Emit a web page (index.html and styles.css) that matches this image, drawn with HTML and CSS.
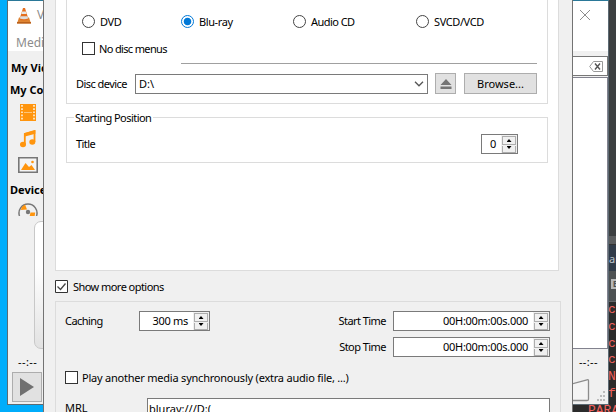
FILE: index.html
```html
<!DOCTYPE html>
<html lang="en">
<head>
<meta charset="utf-8">
<title>Open Media</title>
<link rel="stylesheet" href="styles.css">
</head>
<body>
<div class="desktop">
  <aside class="editor">
    <div class="ed-top"></div>
    <div class="ed-split"></div>
    <div class="ed-tab">ar</div>
    <div class="ed-tools"><span class="ed-icon">E</span></div>
    <div class="ed-log"><p>co</p><p>co</p><p>co</p><p>co</p><p>No</p><p>fr</p><p class="wide">PARAM</p></div>
  </aside>

  <section class="player">
    <header class="titlebar">
      <svg class="cone" width="14" height="18" viewBox="0 0 14 18"><path d="M2 11.5h10l2 6H0z" fill="#dd8432"/><path d="M0 16h14v1.5H0z" fill="#b9601c"/><path d="M6 2h2l3.6 11.4q-4.6 2-9.2 0z" fill="#e56f1f"/><path d="M5.1 5.5h3.8l.8 2.6H4.3z" fill="#e8e8e8"/><path d="M3.5 10.2h7l.7 2.3q-4.2 1.4-8.4 0z" fill="#ddd"/></svg>
      <span class="title">VLC</span>
      <svg class="close" width="12" height="12" viewBox="0 0 12 12"><path d="M1 1l10 10M11 1L1 11" stroke="#8d8d8d" fill="none"/></svg>
    </header>
    <nav class="menubar">Media</nav>
    <div class="workspace">
      <div class="sidebar">
        <b class="h1">My Videos</b>
        <b class="h2">My Computer</b>
        <svg class="film" width="16" height="17" viewBox="0 0 16 17"><path d="M0 0h16v17H0z" fill="#ff950e"/><path d="M2 1v16M14 1v16" stroke="#fff3df" stroke-width="1.6" stroke-dasharray="1.7 1.5"/><path d="M4 8.5h8" stroke="#fcc67c"/></svg>
        <svg class="note" width="16" height="18" viewBox="0 0 16 18"><path d="M4.8 14V4L14.5 1v11" stroke="#ff950e" stroke-width="1.8" fill="none"/><path d="M4 3.2L15.4.2v3.6L4 6.8z" fill="#ff950e"/><ellipse cx="3" cy="14.5" rx="3" ry="2.7" fill="#ff950e"/><ellipse cx="12.3" cy="12" rx="3" ry="2.7" fill="#ff950e"/></svg>
        <svg class="pic" width="20" height="16" viewBox="0 0 20 16"><path d="M.8.8h18.4v14.4H.8z" fill="#f4f4f4" stroke="#777" stroke-width="1.6"/><path d="M3 13l4.5-7 3.5 4 2.5-2 3.5 5z" fill="#ff950e"/><circle cx="14.5" cy="5" r="1.3" fill="#ff950e"/></svg>
        <b class="h3">Devices</b>
        <svg class="disc" width="20" height="14" viewBox="0 0 20 14"><path d="M1.5 14A9 9 0 1 1 18.5 14" stroke="#777" stroke-width="1.5" fill="none"/><path d="M9 7.5L7 2.6A8 8 0 0 0 2.8 8z" fill="#ff950e"/><path d="M12.5 10.5h4.7l-.5 3.5h-5z" fill="#ff950e"/><circle cx="10" cy="10" r="2.2" fill="#777"/></svg>
        <div class="cover"></div>
      </div>
      <div class="playlist">
        <div class="search"><svg width="14" height="11" viewBox="0 0 14 11"><path d="M4.5.5h9v10h-9L.7 5.5z" fill="#fff" stroke="#999"/><path d="M6 2.5l5 6M11 2.5l-5 6" stroke="#555" stroke-width="1.4"/></svg></div>
        <div class="list"></div>
      </div>
    </div>
    <footer class="status">
      <div class="times"><span>--:--</span><span>--:--</span></div>
      <div class="controls">
        <div class="play"><svg width="14" height="18" viewBox="0 0 14 18"><path d="M0 0l14 9-14 9z" fill="#707070"/></svg></div>
        <svg class="volume" width="35" height="24" viewBox="0 0 35 24"><path d="M-6 6.3L14 .8q1.5-.4 1.5 1v18.5q0 1.2-1.5 1.2H-6z" fill="#f4f4f4" stroke="#8c8c8c" stroke-width="1.3"/><path d="M30 15h2M30 19h2M30 23h2M27 19h2M27 23h2M24 23h2" transform="translate(0,-2)" stroke="#bbb" stroke-width="2"/></svg>
      </div>
    </footer>
  </section>

  <main class="dialog">
    <div class="page">
      <section class="group disc-group">
        <div class="radios">
          <label class="opt snug"><i class="radio"></i>DVD</label>
          <label class="opt snug"><i class="radio on"></i>Blu-ray</label>
          <label class="opt tight"><i class="radio"></i>Audio CD</label>
          <label class="opt snug"><i class="radio"></i>SVCD/VCD</label>
        </div>
        <label class="opt menus"><i class="check"></i>No disc menus</label>
        <div class="rule"></div>
        <div class="device">
          <span class="device-label tight">Disc device</span>
          <div class="combo"><span>D:\</span><svg width="10" height="6" viewBox="0 0 10 6"><path d="M1 .8l4 4 4-4" fill="none" stroke="#555" stroke-width="1.3"/></svg></div>
          <div class="btn eject"><svg width="12" height="10" viewBox="0 0 12 10"><path d="M6 0l5.5 6H.5zM.5 7.5h11V10H.5z" fill="#757575"/></svg></div>
          <div class="btn browse">Browse...</div>
        </div>
      </section>
      <section class="group start-group">
        <h2 class="legend tight">Starting Position</h2>
        <span class="title-label tight">Title</span>
        <div class="spin small"><span>0</span><div class="steps"><i></i><i class="dn"></i></div></div>
      </section>
    </div>
    <label class="opt more tight"><svg class="tick" width="13" height="13" viewBox="0 0 13 13"><path d="M.5.5h12v12H.5z" fill="#fff" stroke="#333"/><path d="M2.5 6.5l3 3 5-6" fill="none" stroke="#444" stroke-width="1.3"/></svg>Show more options</label>
    <section class="options">
      <div class="settings">
        <span class="caching tight">Caching</span>
        <div class="spin cache"><span>300 ms</span><div class="steps"><i></i><i class="dn"></i></div></div>
        <span class="time-label start tight">Start Time</span>
        <div class="spin time"><span>00H:00m:00s.000</span><div class="steps"><i></i><i class="dn"></i></div></div>
        <span class="time-label stop tight">Stop Time</span>
        <div class="spin time"><span>00H:00m:00s.000</span><div class="steps"><i></i><i class="dn"></i></div></div>
      </div>
      <label class="opt sync"><i class="check"></i><span class="sync-text">Play another media synchronously (extra audio file, ...)</span></label>
      <div class="mrl"><span>MRL</span><div class="mrl-input">bluray:///D:(</div></div>
    </section>
  </main>
</div>
</body>
</html>
```
FILE: styles.css
```css
* { box-sizing: border-box; }
body { margin: 0; font: 11px/14px "Noto Sans", sans-serif; color: #000; }
svg { display: block; flex: none; }
i { display: block; flex: none; }
.desktop { position: relative; width: 616px; height: 412px; overflow: hidden; background: #00adfb; }
.tight { letter-spacing: -.55px; }
.snug { letter-spacing: -.4px; }

.editor { position: absolute; left: 573px; top: 0; width: 43px; height: 412px; background: #2b2b2b; }
.ed-top { height: 236px; background: #3c3f41; }
.ed-split { height: 9px; background: #5b5d5f; border-bottom: 1px solid #333; }
.ed-tab { height: 26px; padding: 6px 0 0 36px; background: #303b49; color: #bbc4cc; font: 11px/16px "Noto Sans", sans-serif; overflow: hidden; }
.ed-tools { height: 31px; padding: 8px 0 0 38px; background: #4d5153; border-bottom: 1px solid #656769; }
.ed-icon { display: block; width: 10px; height: 10px; background: #b5b7b8; color: #4d5153; font: bold 9px/10px "Liberation Sans", sans-serif; padding-left: 2px; overflow: hidden; }
.ed-log { overflow: hidden; height: 110px; color: #f0605c; font: 13px/16.8px "Liberation Mono", monospace; }
.ed-log p { margin: 0 0 0 35px; white-space: nowrap; }
.ed-log .wide { margin: 0 0 0 15px; }

.player { position: absolute; left: 7px; top: 0; width: 602px; height: 405px; background: #f0f0f0; border: 1px solid #5c6a73; border-top-color: #2a7898; }
.titlebar { display: flex; height: 33px; background: #fff; color: #8c8c8c; }
.cone { margin: 5px 0 0 9px; }
.title { margin: 7px 0 0 6px; font-size: 12px; }
.close { margin: 8px 17px 0 auto; }
.menubar { height: 17px; padding: 2px 0 0 8px; background: #fff; color: #8c8c8c; font-size: 12px; line-height: 14px; }
.workspace { display: flex; justify-content: space-between; height: 298px; }
.sidebar { width: 35px; overflow: hidden; white-space: nowrap; }
.sidebar b { display: block; margin-left: 3px; height: 14px; line-height: 13px; font-weight: 700; }
.sidebar .h1 { margin-top: 10px; }
.sidebar .h2 { margin-top: 8px; margin-left: 2px; }
.sidebar .h3 { margin-top: 10px; margin-left: 2px; }
.film { margin: 7px 0 0 12px; }
.note { margin: 9px 0 0 12px; }
.pic { margin: 9px 0 0 10px; }
.disc { margin: 5px 0 0 10px; }
.cover { margin: 5px 0 0 26px; width: 60px; height: 128px; border: 1px solid #c8c8c8; border-radius: 7px; background: linear-gradient(#fff 35%, #e2e2e2); }
.playlist { width: 36px; padding-top: 5px; }
.search { display: flex; align-items: center; justify-content: flex-end; height: 20px; padding-right: 4px; border: 1px solid #777; background: #fff; }
.list { height: 272px; margin-top: 1px; background: #fff; border: 1px solid #82828e; }
.status { height: 53px; }
.times { display: flex; justify-content: space-between; padding: 6px 10px 0; height: 23px; letter-spacing: .4px; }
.controls { display: flex; justify-content: space-between; }
.play { display: flex; align-items: center; justify-content: center; width: 30px; height: 30px; margin-left: 4px; border: 1px solid #adadad; background: #e1e1e1; }
.volume { margin: 7px 0 0; }

.dialog { position: absolute; left: 43px; top: 0; width: 530px; height: 412px; padding: 0 11px; background: #f0f0f0; border: solid #737373; border-width: 0 1px; overflow: hidden; }
.page { width: 504px; height: 271px; padding: 0 10px; background: #fff; border: 1px solid #dcdcdc; border-top: 0; }
.group { width: 482px; border: 1px solid #dcdcdc; }
.disc-group { height: 104px; border-top: 0; padding: 15px 10px 0 9px; }
.opt { display: flex; align-items: center; height: 13px; white-space: nowrap; }
.radios { display: grid; grid-template-columns: 99px 112px 123px 1fr; padding-left: 6px; }
.radios .opt { gap: 5px; }
.radio { width: 13px; height: 13px; border: 1px solid #444; border-radius: 50%; background: #fff; }
.radio.on { border-color: #0078d7; background: radial-gradient(circle, #0078d7 3.4px, #fff 4.2px); }
.check { width: 13px; height: 13px; border: 1px solid #333; background: #fff; }
.menus { margin: 14px 0 0 6px; gap: 4px; letter-spacing: -.65px; }
.rule { height: 1px; margin: 8px 0 9px 105px; background: #a0a0a0; }
.device { display: flex; align-items: center; height: 21px; }
.device-label { width: 59px; }
.combo { display: flex; align-items: center; justify-content: space-between; width: 293px; height: 20px; margin-right: 7px; padding: 0 3px; border: 1px solid #7a7a7a; background: #fff; }
.btn { display: flex; align-items: center; justify-content: center; height: 21px; border: 1px solid #adadad; background: #e1e1e1; }
.eject { width: 21px; margin-right: 8px; }
.browse { width: 73px; }
.start-group { display: grid; grid-template-columns: 1fr auto; height: 46px; margin-top: 13px; padding: 0 29px 0 9px; align-content: start; }
.legend { grid-column: 1 / 3; justify-self: start; margin: -7px 0 0 -2px; padding: 0 2px 0 1px; height: 14px; font: inherit; background: #fff; }
.title-label { margin-top: 12px; }
.spin { display: flex; align-items: center; justify-content: flex-end; height: 20px; border: 1px solid #7a7a7a; background: #fff; white-space: nowrap; }
.small { width: 37px; margin-top: 9px; }
.spin span { margin-right: 5px; letter-spacing: -.28px; }
.steps { width: 16px; height: 18px; padding: 1px; background: #f0f0f0; }
.steps i { width: 14px; height: 9px; border: 1px solid #adadad; background: #f0f0f0; }
.steps i::before { content: ""; display: block; width: 5px; height: 3px; margin: 2px auto 0; background: #000; clip-path: polygon(50% 0, 100% 100%, 0 100%); }
.steps .dn { height: 7px; border-top: 0; }
.steps .dn::before { margin-top: 1px; clip-path: polygon(0 0, 100% 0, 50% 100%); }
.more { margin: 9px 0 8px; gap: 5px; }
.options { width: 506px; height: 130px; padding: 9px 10px 0 9px; border: 1px solid #dcdcdc; }
.settings { display: grid; grid-template-columns: 74px 71px 1fr 157px; row-gap: 6px; align-items: center; height: 46px; }
.time-label { justify-self: end; margin-right: 7px; }
.stop { grid-column: 3; }
.sync { margin-top: 14px; gap: 4px; letter-spacing: -.22px; }
.mrl { display: flex; justify-content: space-between; margin-top: 14px; }
.mrl span { padding-top: 3px; }
.mrl-input { width: 403px; height: 22px; padding: 3px 0 0 1px; border: 1px solid #7a7a7a; background: #fff; }
```
